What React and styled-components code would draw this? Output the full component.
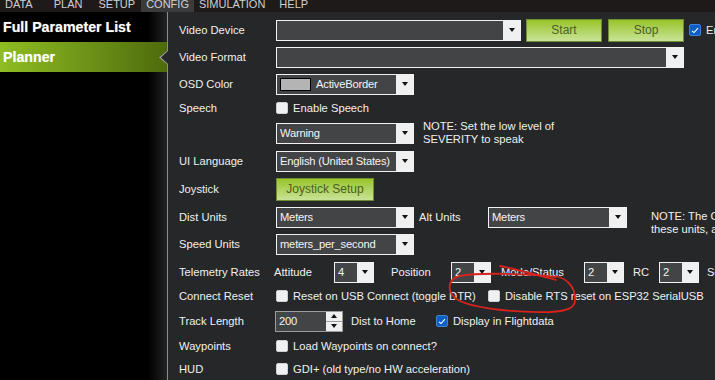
import React from "react";
import styled, { createGlobalStyle, css } from "styled-components";

const GlobalStyle = createGlobalStyle`
  html, body { margin: 0; padding: 0; background: #262729; }
  body { font-family: "Liberation Sans", Arial, sans-serif; overflow: hidden; }
`;

const Screen = styled.div`
  position: relative;
  width: 715px;
  height: 380px;
  overflow: hidden;
  display: flex;
  flex-direction: column;
  background: #262729;
`;

const MenuBar = styled.div`
  height: 12px;
  flex: none;
  display: flex;
  align-items: flex-end;
  overflow: hidden;
  background: #1d1a19;
`;

const MenuItem = styled.div`
  height: 15px;
  line-height: 15px;
  padding: 0 5px;
  margin-left: ${(p) => p.ml || 0}px;
  font-size: 11px;
  color: #cfcfcf;
  background: ${(p) => (p.active ? "#3b3b3b" : "transparent")};
`;

const Body = styled.div`
  flex: 1;
  display: flex;
  min-height: 0;
`;

const Sidebar = styled.div`
  width: 167px;
  flex: none;
  border-right: 1px solid #8c8c8c;
  background: linear-gradient(to right, #000 148px, #222 167px);
`;

const NavItem = styled.div`
  position: relative;
  height: 30px;
  line-height: 30px;
  padding-left: 3px;
  font-size: 14.2px;
  font-weight: bold;
  color: #fff;
  text-shadow: 0 0 1px rgba(255, 255, 255, 0.5);
  ${(p) =>
    p.active &&
    css`
      background: linear-gradient(to right, #8fbd22, #4e6b0c);
      &::before,
      &::after {
        content: "";
        position: absolute;
        top: 8px;
        right: -1px;
        width: 9px;
        height: 15px;
        clip-path: polygon(100% 0, 0 50%, 100% 100%);
      }
      &::before { background: #9a9a9a; }
      &::after { background: #262729; top: 9px; height: 13px; width: 7px; }
    `}
`;

const Main = styled.div`
  flex: 1;
  padding: 4px 0 0 11px;
  background: #262729;
  color: #f0f0f0;
  font-size: 11.2px;
  overflow: hidden;
`;

const Row = styled.div`
  height: ${(p) => p.h}px;
  display: flex;
  align-items: center;
  white-space: nowrap;
`;

const Label = styled.div`
  width: ${(p) => p.w || 97}px;
  flex: none;
`;

const Tag = styled.span`
  flex: none;
  width: ${(p) => (p.w ? `${p.w}px` : "auto")};
  margin-left: ${(p) => p.ml || 0}px;
`;

const Note = styled.div`
  margin-left: ${(p) => p.ml}px;
  line-height: 13px;
  ${(p) => p.top && css`align-self: flex-start; margin-top: ${p.top}px;`}
`;

const ComboBox = styled.div`
  width: ${(p) => p.w}px;
  height: 21px;
  box-sizing: border-box;
  flex: none;
  margin-left: ${(p) => p.ml || 0}px;
  display: flex;
  border: 1px solid #f2f2f2;
  background: #434446;
`;

const ComboText = styled.div`
  flex: 1;
  display: flex;
  align-items: center;
  padding-left: 3px;
  overflow: hidden;
  font-size: 11.2px;
  letter-spacing: -0.2px;
  color: #f4f4f4;
`;

const ComboButton = styled.div`
  width: ${(p) => p.bw || 17}px;
  flex: none;
  display: flex;
  align-items: center;
  justify-content: center;
  background: #f0f0f0;
`;

const Caret = styled.span`
  width: 0;
  height: 0;
  border-left: 3.5px solid transparent;
  border-right: 3.5px solid transparent;
  border-${(p) => (p.up ? "bottom" : "top")}: 4px solid #111;
`;

const Swatch = styled.span`
  width: 29px;
  height: 11px;
  flex: none;
  margin-right: 5px;
  background: #b4b4b4;
  border: 1px solid #000;
`;

const GreenButton = styled.div`
  width: ${(p) => p.w}px;
  height: 23px;
  box-sizing: border-box;
  flex: none;
  margin-left: ${(p) => p.ml || 0}px;
  display: flex;
  align-items: center;
  justify-content: center;
  border: 1px solid #6f8d34;
  background: linear-gradient(to bottom, #98c42a, #c9e398);
  color: #4d5e22;
  font-size: 12px;
`;

const Box = styled.span`
  width: 12px;
  height: 12px;
  box-sizing: border-box;
  flex: none;
  margin-left: ${(p) => p.ml || 0}px;
  border-radius: 2px;
  display: flex;
  align-items: center;
  justify-content: center;
  background: ${(p) => (p.checked ? "#0d5fc4" : "#f1f1f1")};
  border: 1px solid ${(p) => (p.checked ? "#3f82d6" : "#d0d0d0")};
`;

const CheckGroup = styled.div`
  display: flex;
  align-items: center;
  gap: 5px;
  flex: none;
  width: ${(p) => (p.w ? `${p.w}px` : "auto")};
  margin-left: ${(p) => p.ml || 0}px;
`;

const Numeric = styled.div`
  width: 68px;
  height: 21px;
  box-sizing: border-box;
  flex: none;
  display: flex;
  border: 1px solid #9c9c9c;
  background: #434446;
`;

const Spinner = styled.div`
  width: 16px;
  display: flex;
  flex-direction: column;
  gap: 1px;
  background: #9c9c9c;
`;

const SpinHalf = styled.div`
  flex: 1;
  display: flex;
  align-items: center;
  justify-content: center;
  background: #f0f0f0;
`;

const Overlay = styled.svg`
  position: absolute;
  left: 0;
  top: 0;
  pointer-events: none;
`;

function Combo({ w, ml, bw, children }) {
  return (
    <ComboBox w={w} ml={ml}>
      <ComboText>{children}</ComboText>
      <ComboButton bw={bw}>
        <Caret />
      </ComboButton>
    </ComboBox>
  );
}

function Check({ checked, ml, w, children }) {
  return (
    <CheckGroup ml={ml} w={w}>
      <Box checked={checked}>
        {checked && (
          <svg width="8" height="7" viewBox="0 0 8 7">
            <polyline points="1,3.8 3,5.6 7,1.2" fill="none" stroke="#fff" strokeWidth="1.1" />
          </svg>
        )}
      </Box>
      {children && <span>{children}</span>}
    </CheckGroup>
  );
}

const menu = [
  { t: "DATA", ml: 0 },
  { t: "PLAN", ml: 11 },
  { t: "SETUP", ml: 6 },
  { t: "CONFIG", ml: 1, active: true },
  { t: "SIMULATION", ml: 0 },
  { t: "HELP", ml: 4 },
];

export default function App() {
  return (
    <>
      <GlobalStyle />
      <Screen>
        <MenuBar>
          {menu.map((m) => (
            <MenuItem key={m.t} ml={m.ml} active={m.active}>
              {m.t}
            </MenuItem>
          ))}
        </MenuBar>
        <Body>
          <Sidebar>
            <NavItem>Full Parameter List</NavItem>
            <NavItem active>Planner</NavItem>
          </Sidebar>
          <Main>
            <Row h={28}>
              <Label>Video Device</Label>
              <Combo w={245} />
              <GreenButton w={76} ml={5}>Start</GreenButton>
              <GreenButton w={76} ml={6}>Stop</GreenButton>
              <Check checked ml={5}>Enable</Check>
            </Row>
            <Row h={26}>
              <Label>Video Format</Label>
              <Combo w={408} />
            </Row>
            <Row h={28}>
              <Label>OSD Color</Label>
              <ComboBox w={138}>
                <ComboText>
                  <Swatch />
                  ActiveBorder
                </ComboText>
                <ComboButton>
                  <Caret />
                </ComboButton>
              </ComboBox>
            </Row>
            <Row h={20}>
              <Label>Speech</Label>
              <Check>Enable Speech</Check>
            </Row>
            <Row h={30}>
              <Label />
              <Combo w={138}>Warning</Combo>
              <Note ml={9}>
                NOTE: Set the low level of
                <br />
                SEVERITY to speak
              </Note>
            </Row>
            <Row h={26}>
              <Label>UI Language</Label>
              <Combo w={138}>English (United States)</Combo>
            </Row>
            <Row h={30}>
              <Label>Joystick</Label>
              <GreenButton w={98}>Joystick Setup</GreenButton>
            </Row>
            <Row h={26}>
              <Label>Dist Units</Label>
              <Combo w={138}>Meters</Combo>
              <Tag w={69} ml={5}>Alt Units</Tag>
              <Combo w={139}>Meters</Combo>
              <Note ml={24} top={6}>
                NOTE: The Calculated values use
                <br />
                these units, and may be rounded
              </Note>
            </Row>
            <Row h={28}>
              <Label>Speed Units</Label>
              <Combo w={138}>meters_per_second</Combo>
            </Row>
            <Row h={28}>
              <Label w={95}>Telemetry Rates</Label>
              <Tag w={60}>Attitude</Tag>
              <Combo w={40} bw={16}>4</Combo>
              <Tag w={60} ml={17}>Position</Tag>
              <Combo w={40} bw={16}>2</Combo>
              <Tag w={83} ml={10}>Mode/Status</Tag>
              <Combo w={40} bw={16}>2</Combo>
              <Tag w={26} ml={9}>RC</Tag>
              <Combo w={40} bw={16}>2</Combo>
              <Tag ml={8}>Sensor</Tag>
            </Row>
            <Row h={20}>
              <Label>Connect Reset</Label>
              <Check w={212}>Reset on USB Connect (toggle DTR)</Check>
              <Check>Disable RTS reset on ESP32 SerialUSB</Check>
            </Row>
            <Row h={30}>
              <Label w={96}>Track Length</Label>
              <Numeric>
                <ComboText>200</ComboText>
                <Spinner>
                  <SpinHalf>
                    <Caret up />
                  </SpinHalf>
                  <SpinHalf>
                    <Caret />
                  </SpinHalf>
                </Spinner>
              </Numeric>
              <Tag w={85} ml={8}>Dist to Home</Tag>
              <Check checked>Display in Flightdata</Check>
            </Row>
            <Row h={20}>
              <Label>Waypoints</Label>
              <Check>Load Waypoints on connect?</Check>
            </Row>
            <Row h={26}>
              <Label>HUD</Label>
              <Check>GDI+ (old type/no HW acceleration)</Check>
            </Row>
          </Main>
        </Body>
        <Overlay width="715" height="380" viewBox="0 0 715 380">
          <g fill="none" stroke="#d6231e" strokeWidth="1.8" strokeLinecap="round">
            <path d="M500 266 C 520 270, 540 276, 556 280" />
            <path d="M556 277 C 530 274, 480 272, 460 276 C 447 279, 446 292, 458 300 C 475 309, 520 313, 550 312 C 568 311, 576 308, 575 298 C 575 288, 568 279, 556 276" />
          </g>
        </Overlay>
      </Screen>
    </>
  );
}
